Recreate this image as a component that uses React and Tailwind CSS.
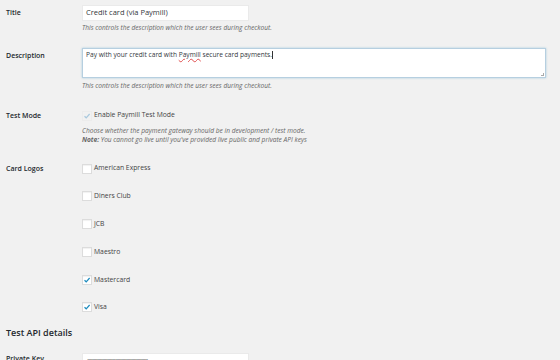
import React from "react";

const font = { fontFamily: '"Open Sans", "Noto Sans", sans-serif' };

function Check({ checked, faint }) {
  return (
    <span
      className={`w-[10px] h-[10px] shrink-0 flex items-center justify-center ${
        faint ? "bg-[#f1f1f1] border border-[#ececec]" : "bg-white border border-[#dcdcdc] shadow-[inset_0_1px_1px_rgba(0,0,0,0.06)]"
      }`}
    >
      {checked && (
        <svg width="8" height="8" viewBox="0 0 8 8">
          <path
            d="M1.5 4.2 L3.2 5.8 L6.6 2"
            fill="none"
            stroke={faint ? "#a9c9de" : "#1e8cbe"}
            strokeWidth="1.2"
          />
        </svg>
      )}
    </span>
  );
}

function Label({ children, className = "" }) {
  return (
    <div className={`w-[82px] shrink-0 pl-[6px] text-[7px] font-semibold text-[#23282d] ${className}`}>
      {children}
    </div>
  );
}

function Help({ children, className = "" }) {
  return <p className={`text-[6.6px] italic text-[#666] leading-[9px] whitespace-nowrap ${className}`}>{children}</p>;
}

export default function App() {
  const cards = [
    { name: "American Express", checked: false },
    { name: "Diners Club", checked: false },
    { name: "JCB", checked: false },
    { name: "Maestro", checked: false },
    { name: "Mastercard", checked: true },
    { name: "Visa", checked: true },
  ];

  return (
    <div className="w-[560px] h-[360px] overflow-hidden bg-[#f1f1f1]" style={font}>
      <div className="flex pt-[5px]">
        <Label className="pt-[3px]">Title</Label>
        <div className="flex flex-col">
          <div className="w-[167px] h-[16px] bg-white border border-[#eaeaea] px-[3px] flex items-center text-[7.5px] text-[#32373c]">
            Credit card (via Paymill)
          </div>
          <Help className="mt-[2px]">This controls the description which the user sees during checkout.</Help>
        </div>
      </div>

      <div className="flex mt-[16px]">
        <Label className="pt-[3px]">Description</Label>
        <div className="flex flex-col">
          <div className="relative w-[464px] h-[30px] bg-white border border-[#b6cfe0] shadow-[0_0_2px_rgba(30,140,190,0.35)] px-[3px] pt-[1px] text-[6.6px] text-[#32373c]">
            Pay with your credit card with{" "}
            <span className="underline decoration-wavy decoration-[#e05050] decoration-[0.5px]">Paymill</span>{" "}
            secure card payments.<span className="inline-block w-[0.5px] h-[8px] bg-[#333] align-middle" />
            <span className="absolute right-[1px] bottom-[1px] w-[3px] h-[3px] border-r border-b border-[#aaa]" />
          </div>
          <Help className="mt-[3px]">This controls the description which the user sees during checkout.</Help>
        </div>
      </div>

      <div className="flex mt-[20px]">
        <Label className="pt-[1px]">Test Mode</Label>
        <div className="flex flex-col">
          <div className="flex items-center gap-[2px] h-[11px] text-[6.8px] text-[#444]">
            <Check checked faint />
            <span>Enable Paymill Test Mode</span>
          </div>
          <Help className="mt-[5px]">Choose whether the payment gateway should be in development / test mode.</Help>
          <Help>
            <span className="font-bold">Note:</span> You cannot go live until you've provided live public and private API keys
          </Help>
        </div>
      </div>

      <div className="flex mt-[19px]">
        <Label className="pt-[1px]">Card Logos</Label>
        <div className="flex flex-col gap-[16.8px]">
          {cards.map((c) => (
            <div key={c.name} className="flex items-center gap-[2px] h-[11px] text-[6.8px] text-[#444]">
              <Check checked={c.checked} />
              <span>{c.name}</span>
            </div>
          ))}
        </div>
      </div>

      <h3 className="mt-[14px] pl-[6px] text-[9px] font-semibold text-[#23282d] leading-[12px]">Test API details</h3>

      <div className="flex mt-[14px]">
        <Label className="pt-[1px]">Private Key</Label>
        <div className="w-[167px] h-[16px] bg-white border border-[#eaeaea] px-[4px] flex items-center text-[6px] text-[#999] tracking-[-1px]">
          ••••••••••••••••••••••••••••••••••••••••••••••••
        </div>
      </div>
    </div>
  );
}
